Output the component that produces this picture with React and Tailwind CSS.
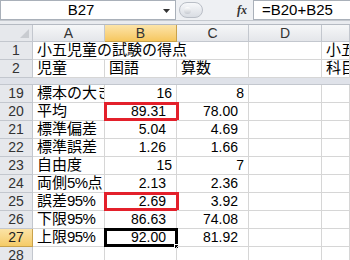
import React from 'react'

const rows = [
  { n: '19', a: '標本の大きさ', b: '16', c: '8' },
  { n: '20', a: '平均', b: '89.31', c: '78.00', mark: 'red' },
  { n: '21', a: '標準偏差', b: '5.04', c: '4.69' },
  { n: '22', a: '標準誤差', b: '1.26', c: '1.66' },
  { n: '23', a: '自由度', b: '15', c: '7' },
  { n: '24', a: '両側5%点', b: '2.13', c: '2.36' },
  { n: '25', a: '誤差95%', b: '2.69', c: '3.92', mark: 'red' },
  { n: '26', a: '下限95%', b: '86.63', c: '74.08' },
  { n: '27', a: '上限95%', b: '92.00', c: '81.92', mark: 'active' },
  { n: '28', a: '', b: '', c: '' },
]

const grid = 'border-r border-b border-[#d6d6d6]'

function RowHead({ n, active }) {
  return (
    <div
      className={`w-[33px] shrink-0 flex items-center justify-center text-[14px] border-r border-b ${
        active
          ? 'bg-gradient-to-b from-[#fbe3a6] to-[#f5cb66] border-[#c9a24b] text-[#222]'
          : 'bg-[#e6e8ec] border-[#c3c7ce] text-[#333]'
      }`}
    >
      {n}
    </div>
  )
}

function Num({ v, mark, w }) {
  const pad = v.includes('.') ? 'pr-[10px]' : 'pr-[4px]'
  return (
    <div className={`${w} shrink-0 relative flex items-center justify-end text-[14px] ${pad} ${grid}`}>
      {v}
      {mark === 'red' && (
        <div className="absolute -top-px -left-px -right-[3px] -bottom-px border-[3px] border-[#e3202b]" />
      )}
      {mark === 'active' && (
        <>
          <div className="absolute -top-[1px] -left-[1px] -right-[2px] -bottom-[1px] border-[3px] border-black" />
          <div className="absolute -right-[3px] -bottom-[3px] w-[5px] h-[5px] bg-black border border-white" />
        </>
      )}
    </div>
  )
}

// label text: digits and % set a touch tighter, like the proportional half-width glyphs
function Label({ t }) {
  const parts = t.split(/([0-9%]+)/)
  return parts.map((p, i) =>
    /[0-9%]/.test(p) ? (
      <span key={i} className="tracking-[-0.6px]">{p}</span>
    ) : (
      <span key={i}>{p}</span>
    )
  )
}

export default function App() {
  return (
    <div className="w-[350px] h-[260px] overflow-hidden bg-white text-black font-['Liberation_Sans','Noto_Sans_CJK_JP',sans-serif]">
      {/* formula bar */}
      <div className="flex h-[21px] bg-[#eef0f3] border-b border-[#c4c8ce]">
        <div className="w-[176px] shrink-0 bg-white border border-[#a9b0b9] flex items-center relative">
          <span className="flex-1 text-center text-[15px] pl-[2px] pr-[16px]">B27</span>
          <svg className="absolute right-[4px] top-[8px]" width="8" height="5" viewBox="0 0 8 5">
            <path d="M0 0h7L3.5 4z" fill="#333" />
          </svg>
        </div>
        <div className="w-[78px] shrink-0 flex items-center relative border-r border-[#a9b0b9]">
          <div className="ml-[3px] w-[24px] h-[16px] rounded-full border border-[#b9bec6] bg-gradient-to-b from-[#f7f8fa] to-[#d9dde3] flex items-center pl-[4px]">
            <div className="w-[7px] h-[7px] rounded-full bg-gradient-to-b from-white to-[#c6cad1]" />
          </div>
          <span className="ml-auto mr-[6px] text-[12px] italic font-bold font-['Liberation_Serif',serif] text-[#333]">
            fx
          </span>
        </div>
        <div className="flex-1 bg-white border-y border-[#a9b0b9] flex items-center pl-[8px] text-[15px]">
          =B20+B25
        </div>
      </div>
      <div className="h-[4px] bg-[#e9ebef] border-b border-[#b5bac2]" />

      {/* column headers */}
      <div className="flex h-[17px] text-[14px] text-[#333]">
        <div className="w-[33px] shrink-0 bg-[#e6e8ec] border-r border-b border-[#c3c7ce] relative">
          <svg className="absolute right-[3px] bottom-[3px]" width="9" height="9" viewBox="0 0 9 9">
            <path d="M9 0V9H0z" fill="#c9ccd1" />
          </svg>
        </div>
        {['A', 'B', 'C', 'D', ''].map((l, i) => (
          <div
            key={i}
            className={`${i === 3 ? 'w-[73px]' : i === 4 ? 'flex-1' : 'w-[72px]'} shrink-0 flex items-center justify-center border-r border-b ${
              l === 'B'
                ? 'bg-gradient-to-b from-[#fce4a8] to-[#f6c75e] border-[#c9a24b]'
                : 'bg-gradient-to-b from-[#f6f7f8] to-[#e4e6ea] border-[#c3c7ce]'
            }`}
          >
            {l}
          </div>
        ))}
      </div>

      {/* rows 1-2 */}
      <div className="flex h-[18px] text-[15px]">
        <RowHead n="1" />
        <div className="w-[216px] shrink-0 flex items-center pl-[4px] whitespace-nowrap border-r border-b border-[#d6d6d6]">
          小五児童の試験の得点
        </div>
        <div className={`w-[73px] shrink-0 ${grid}`} />
        <div className={`flex-1 flex items-center pl-[4px] whitespace-nowrap overflow-hidden ${grid}`}>小五</div>
      </div>
      <div className="flex h-[18px] text-[15px]">
        <RowHead n="2" />
        <div className={`w-[72px] shrink-0 flex items-center pl-[4px] ${grid}`}>児童</div>
        <div className={`w-[72px] shrink-0 flex items-center pl-[4px] ${grid}`}>国語</div>
        <div className={`w-[72px] shrink-0 flex items-center pl-[4px] ${grid}`}>算数</div>
        <div className={`w-[73px] shrink-0 ${grid}`} />
        <div className={`flex-1 flex items-center pl-[4px] whitespace-nowrap overflow-hidden ${grid}`}>科目</div>
      </div>

      {/* frozen pane divider */}
      <div className="h-[7px] bg-[#dfe2e9] border-b border-[#c3c7ce]" />

      {/* rows 19+ */}
      {rows.map((r) => (
        <div key={r.n} className="flex h-[18px]">
          <RowHead n={r.n} active={r.mark === 'active'} />
          <div className={`w-[72px] shrink-0 flex items-center pl-[4px] text-[15px] whitespace-nowrap overflow-hidden ${grid}`}>
            <Label t={r.a} />
          </div>
          <Num v={r.b} mark={r.mark} w="w-[72px]" />
          <Num v={r.c} w="w-[72px]" />
          <div className={`w-[73px] shrink-0 ${grid}`} />
          <div className={`flex-1 ${grid}`} />
        </div>
      ))}
    </div>
  )
}
